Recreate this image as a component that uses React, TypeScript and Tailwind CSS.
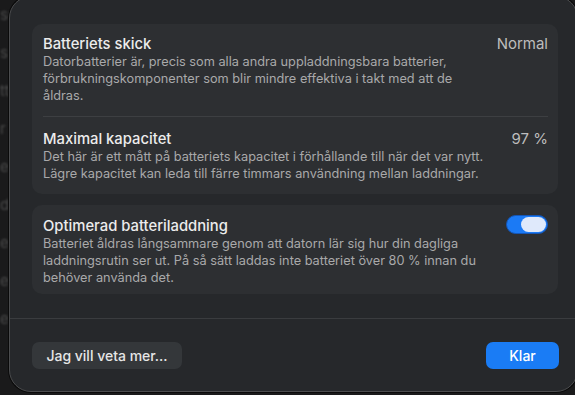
import React from "react";

const font = { fontFamily: "Inter, 'Noto Sans', sans-serif" };

function Toggle() {
  return (
    <div className="w-[42px] h-[19px] mt-[-2px] rounded-full bg-[#1b7af5] border border-[#1456b8] flex items-center justify-end px-[1px] shrink-0">
      <div className="w-[25px] h-[15px] rounded-full bg-[#dfe9fb]" />
    </div>
  );
}

export default function App() {
  return (
    <div className="w-[575px] h-[395px] bg-[#1a1a1b] overflow-hidden relative" style={font}>
      <div className="absolute left-0 top-0 w-[12px] h-full flex flex-col gap-[20px] pt-[6px] text-[#4a4a4a] text-[15px] blur-[1px] leading-[18px]">
        <span>se</span>
        <span>s</span>
        <span>tt</span>
        <span>r</span>
        <span>e</span>
        <span>d</span>
        <span>e</span>
        <span>e</span>
        <span>e</span>
      </div>
      <div className="relative ml-[9px] mt-[-4px] w-[569px] h-[396px] rounded-[22px] bg-[#26282b] border border-[#4b4c4e] shadow-[0_0_0_1px_#0a0a0a] flex flex-col">
        <div className="flex flex-col gap-[11px] pt-[27px] pl-[22px] pr-[19px]">
          <div className="rounded-[10px] bg-[#2d2f32] pt-[11px] pb-[12px] pl-[11px] pr-[10px] flex flex-col">
            <div className="flex justify-between items-start">
              <span className="text-[14.8px] leading-[18px] font-medium text-[#ececec]">Batteriets skick</span>
              <span className="text-[15px] leading-[18px] text-[#bdbdbd]">Normal</span>
            </div>
            <p className="text-[12.75px] leading-[17px] text-[#a9a9aa]">
              Datorbatterier är, precis som alla andra uppladdningsbara batterier,
              <br />
              förbrukningskomponenter som blir mindre effektiva i takt med att de
              <br />
              åldras.
            </p>
            <div className="h-px bg-[#3d3f42] mt-[12px] mb-[13px]" />
            <div className="flex justify-between items-start">
              <span className="text-[14.8px] leading-[18px] font-medium text-[#ececec]">Maximal kapacitet</span>
              <span className="text-[15px] leading-[18px] text-[#bdbdbd]">97 %</span>
            </div>
            <p className="text-[12.75px] leading-[17px] text-[#a9a9aa]">
              Det här är ett mått på batteriets kapacitet i förhållande till när det var nytt.
              <br />
              Lägre kapacitet kan leda till färre timmars användning mellan laddningar.
            </p>
          </div>
          <div className="rounded-[10px] bg-[#2d2f32] pt-[12px] pb-[8px] pl-[11px] pr-[10px] flex flex-col">
            <div className="flex justify-between items-start">
              <span className="text-[14.8px] leading-[18px] font-medium text-[#ececec]">Optimerad batteriladdning</span>
              <Toggle />
            </div>
            <p className="text-[12.75px] leading-[17px] text-[#a9a9aa]">
              Batteriet åldras långsammare genom att datorn lär sig hur din dagliga
              <br />
              laddningsrutin ser ut. På så sätt laddas inte batteriet över 80 % innan du
              <br />
              behöver använda det.
            </p>
          </div>
        </div>
        <div className="h-px bg-[#3a3c3f] mt-[24px]" />
        <div className="flex justify-between items-center pl-[22px] pr-[18px] pt-[23px]">
          <button className="h-[27px] w-[150px] rounded-[7px] bg-[#34373a] text-[14px] text-[#e6e6e6] font-medium">
            Jag vill veta mer...
          </button>
          <button className="h-[27px] w-[73px] rounded-[7px] bg-[#1a7cf5] text-[14px] text-white font-medium">
            Klar
          </button>
        </div>
      </div>
    </div>
  );
}
